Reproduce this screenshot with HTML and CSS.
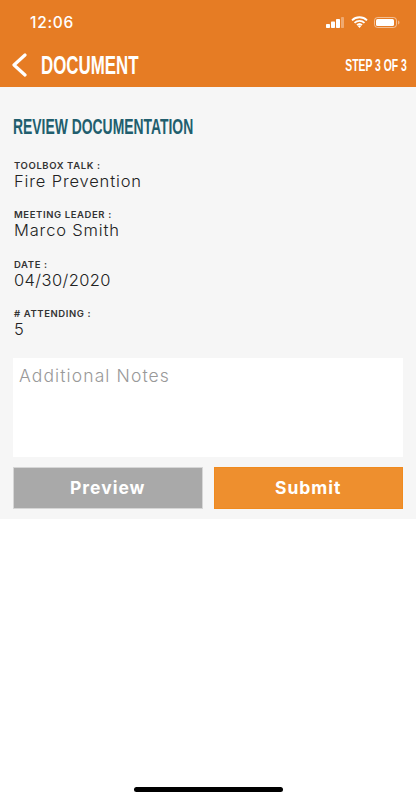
FILE: index.html
```html
<!DOCTYPE html>
<html lang="en">
<head>
<meta charset="utf-8">
<title>Document</title>
<link rel="stylesheet" href="styles.css">
</head>
<body>
<div class="screen">
  <header class="header">
    <div class="status">
      <span class="time">12:06</span>
      <div class="status-icons">
        <svg class="signal" width="19" height="11" viewBox="0 0 19 11"><rect x="0" y="7" width="4" height="4" rx=".7" fill="#fff"/><rect x="5" y="4.500" width="4" height="6.500" rx=".7" fill="#fff"/><rect x="10" y="2" width="4" height="9" rx=".7" fill="#fff"/><rect x="15" y="0" width="3" height="11" rx=".7" fill="#fff" opacity=".35"/></svg>
        <svg class="wifi" width="17" height="12" viewBox="0 0 17 12"><path d="M1 4.300a10.800 10.800 0 0 1 15 0M3.500 6.800a7.200 7.200 0 0 1 10 0M6 9.200a3.600 3.600 0 0 1 5 0" fill="none" stroke="#fff" stroke-width="1.800"/><path d="M8.500 12l-1.700-2a2.500 2.500 0 0 1 3.400 0z" fill="#fff"/></svg>
        <svg class="battery" width="26" height="11" viewBox="0 0 26 11"><rect x=".5" y=".5" width="22" height="10" rx="3" fill="none" stroke="#fff" stroke-opacity=".5"/><rect x="2" y="2" width="18" height="7" rx="1.500" fill="#fff"/><path d="M24 3.500v4c.8-.3 1.500-1 1.500-2s-.7-1.700-1.500-2z" fill="#fff" opacity=".45"/></svg>
      </div>
    </div>
    <div class="nav">
      <div class="nav-left">
        <svg class="back" width="16" height="24" viewBox="0 0 16 24"><path d="M14 2 3 12l11 10" fill="none" stroke="#fff" stroke-width="3.200" stroke-linecap="round" stroke-linejoin="round"/></svg>
        <span class="nav-title">DOCUMENT</span>
      </div>
      <span class="nav-step">STEP 3 OF 3</span>
    </div>
  </header>
  <main class="content">
    <h1 class="heading">REVIEW DOCUMENTATION</h1>
    <div class="field"><div class="label">TOOLBOX TALK :</div><div class="value">Fire Prevention</div></div>
    <div class="field"><div class="label">MEETING LEADER :</div><div class="value">Marco Smith</div></div>
    <div class="field"><div class="label">DATE :</div><div class="value value-num">04/30/2020</div></div>
    <div class="field"><div class="label"># ATTENDING :</div><div class="value value-num">5</div></div>
    <div class="notes">Additional Notes</div>
    <div class="actions">
      <div class="btn btn-preview">Preview</div>
      <div class="btn btn-submit">Submit</div>
    </div>
  </main>
  <div class="spacer"><div class="home-bar"></div></div>
</div>
</body>
</html>
```
FILE: styles.css
```css
* { box-sizing: border-box; }
html, body { margin: 0; padding: 0; background: #fff; }
.screen { width: 416px; height: 800px; display: flex; flex-direction: column; font-family: Inter, "Open Sans", sans-serif; overflow: hidden; }
.header { height: 87px; background: #e67c24; color: #fff; padding: 0 9px 0 11px; display: flex; flex-direction: column; }
.status { height: 44px; display: flex; justify-content: space-between; align-items: center; padding: 0 7px 0 19px; }
.time { font-size: 15.500px; font-weight: 500; letter-spacing: .7px; }
.status-icons { display: flex; align-items: center; gap: 6px; }
.nav { flex: 1; display: flex; justify-content: space-between; align-items: center; padding-bottom: 1px; }
.nav-left { display: flex; align-items: center; gap: 14px; }
.nav-title { display: inline-block; font-family: "Liberation Sans", sans-serif; font-weight: 700; font-size: 25px; line-height: 1; transform: scaleX(.675); transform-origin: left center; }
.nav-step { display: inline-block; font-family: "Liberation Sans", sans-serif; font-weight: 700; font-size: 16.500px; line-height: 1; transform: scaleX(.63); transform-origin: right center; }
.content { height: 432px; background: #f6f6f6; padding: 28px 13px 0; }
.heading { margin: 0 0 23px; font-family: "Liberation Sans", sans-serif; font-weight: 700; font-size: 22px; line-height: 23px; color: #215e6e; transform: scaleX(.632); transform-origin: left center; white-space: nowrap; }
.field { height: 49.300px; }
.label { margin-bottom: 2px; font-size: 9.500px; font-weight: 600; line-height: 9px; color: #333; letter-spacing: .6px; padding-left: 1px; }
.value { font-size: 16.500px; font-weight: 300; line-height: 18px; color: #222; letter-spacing: .85px; padding-left: 1px; }
.value-num { letter-spacing: .4px; }
.notes { height: 99px; background: #fff; padding: 8px 6px; font-size: 17.500px; font-weight: 300; line-height: 20px; color: #999; letter-spacing: 1.100px; }
.actions { margin-top: 9.500px; display: flex; gap: 11px; }
.btn { flex: 1; height: 42.500px; display: flex; align-items: center; justify-content: center; color: #fff; font-size: 17.500px; font-weight: 700; letter-spacing: 1px; }
.btn-preview { background: #a9a9a9; border: 1px solid #d6d6d6; }
.btn-submit { background: #ee8f2e; border: 1px solid #f08a1e; }
.spacer { flex: 1; position: relative; background: #fff; }
.home-bar { position: absolute; left: 134px; bottom: 8px; width: 149px; height: 5px; border-radius: 3px; background: #000; }
```
